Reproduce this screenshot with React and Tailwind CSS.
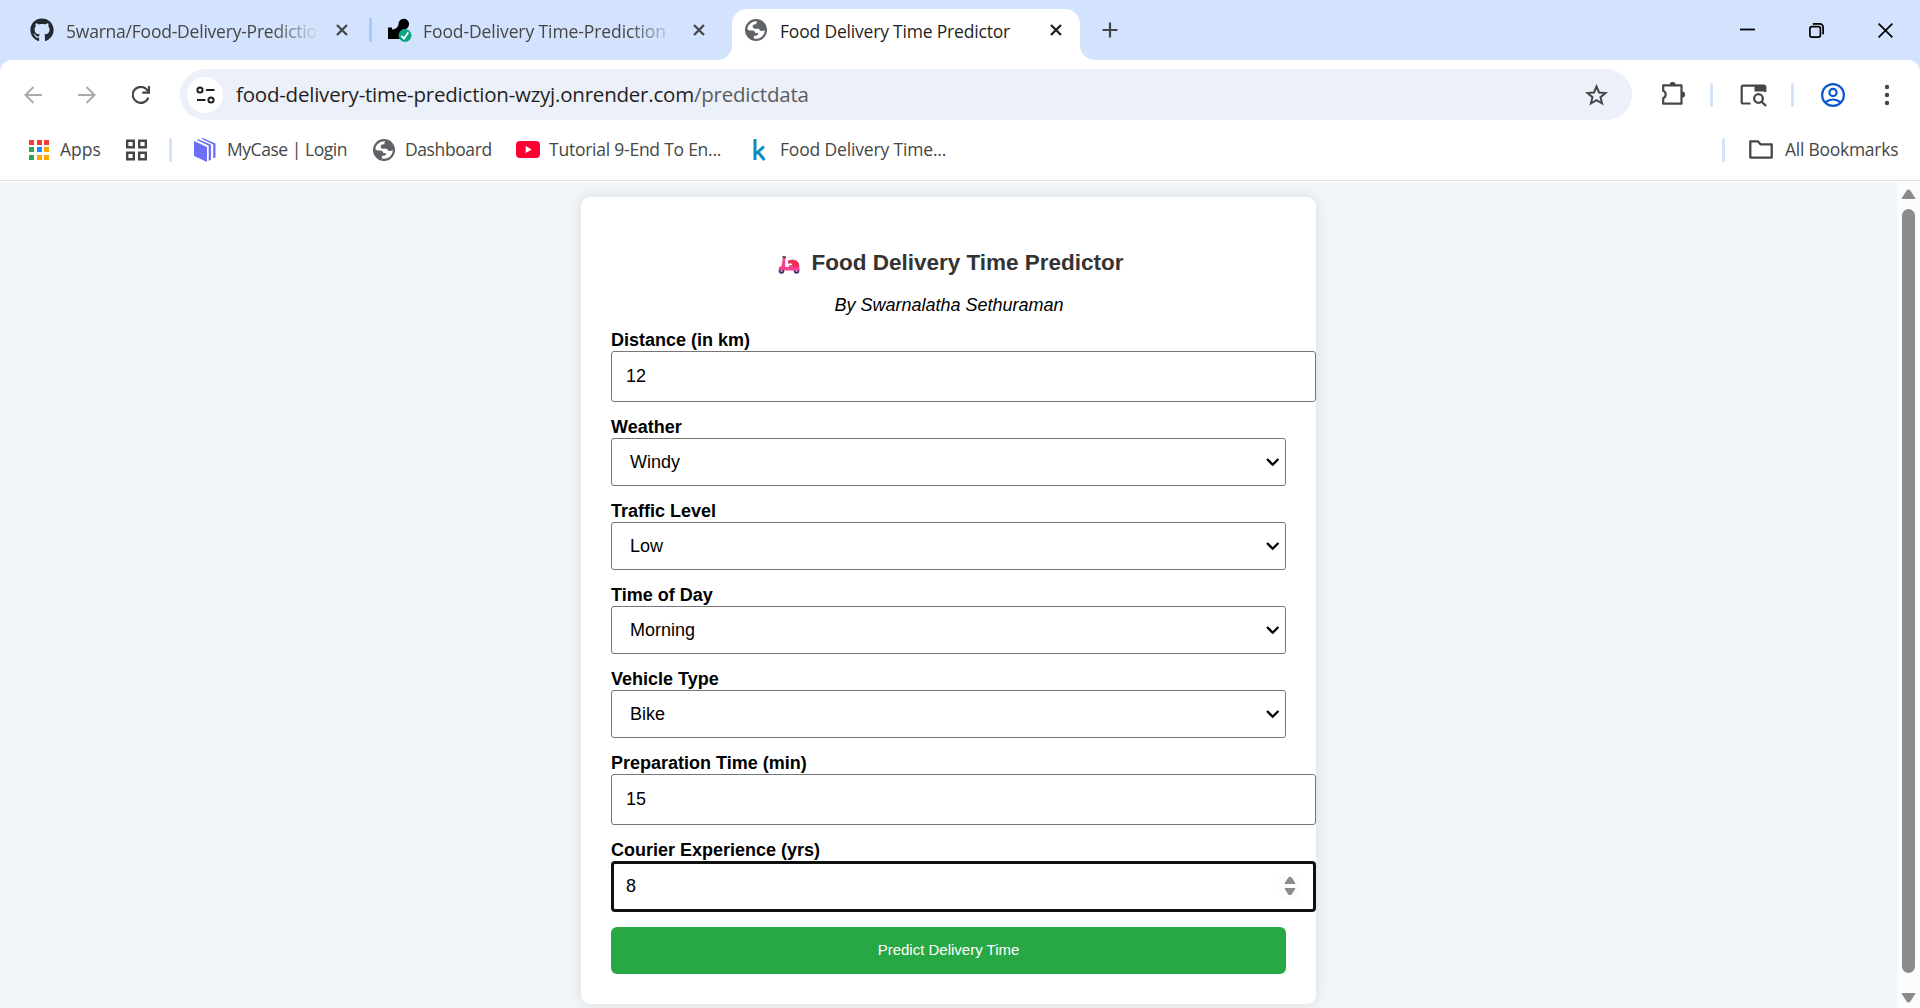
import React from "react";
import { FaGithub } from "react-icons/fa";

function Globe() {
  return (
    <svg width="22" height="22" viewBox="0 0 22 22" className="block shrink-0">
      <circle cx="11" cy="11" r="11" fill="#5f6368" />
      <path d="M12.2 2.4C7.500 2 3 5.200 2.300 10.200c1.500 1.300 3.200 1.300 5.200 1.300 1.600 0 2.600 1 2.800 2.600h2.600c.4 1.700-.6 2.600-2.300 2.700l-1.700.2v2.400c4.700 1.200 9.400-1.400 10.600-6.200l.2-2.200c-1 .8-1.900 1.200-3.200 1.100-1.300-.1-2.200-1-2.400-2.300h-4c-1.600 0-2.500-1-2.400-2.400.1-1.400 1-2.200 2.500-2.200h1.100c0-1.200.2-2.100.9-2.800z" fill="#fff" />
    </svg>
  );
}

const Close = ({ color = "#454746" }) => (
  <svg width="12" height="12" viewBox="0 0 12 12" className="block shrink-0">
    <path d="M1 1l10 10M11 1L1 11" stroke={color} strokeWidth="2.300" />
  </svg>
);

function TabStrip() {
  return (
    <div className="flex h-[60px] shrink-0 bg-[#d3e2fd] text-[17.5px] text-[#454746]">
      <div className="flex h-[60px] w-[372px] items-center pl-[30px]">
        <FaGithub size={24} color="#24292f" className="shrink-0" />
        <div className="ml-3 mt-[3px] w-[253px] whitespace-nowrap tracking-[-0.22px] [mask-image:linear-gradient(to_right,black_82%,transparent)]">
          5warna/Food-Delivery-Predictio
        </div>
        <div className="ml-[17px]"><Close /></div>
        <div className="ml-[21px] h-6 w-[3px] shrink-0 bg-[#a8c7fa]" />
      </div>
      <div className="flex h-[60px] w-[360px] items-center pl-4">
        <svg width="24" height="24" viewBox="0 0 24 24" className="shrink-0">
          <path d="M0 9.500h4v2C8 11.200 10.300 9 10.500 6a5.300 5.300 0 1 1 5.500 5.300c-2.200.2-3.500 1.700-3.500 4V21H0z" fill="#000" />
          <circle cx="17" cy="17.500" r="6.500" fill="#0aa37f" />
          <path d="M13.300 17.800l2.700 2.700 4.300-6" fill="none" stroke="#fff" strokeWidth="1.900" />
        </svg>
        <div className="ml-[11px] mt-[3px] w-[252px] whitespace-nowrap tracking-[-0.09px] [mask-image:linear-gradient(to_right,black_82%,transparent)]">
          Food-Delivery Time-Prediction
        </div>
        <div className="ml-[18px]"><Close /></div>
      </div>
      <div className="relative mt-[9px] flex h-[51px] w-[348px] items-center rounded-t-[15px] bg-white pb-[9px] pl-[13px]">
        <svg width="15" height="15" className="absolute -left-[15px] bottom-0"><path d="M15 0V15H0A15 15 0 0 0 15 0z" fill="#fff" /></svg>
        <svg width="15" height="15" className="absolute -right-[15px] bottom-0"><path d="M0 0V15H15A15 15 0 0 1 0 0z" fill="#fff" /></svg>
        <Globe />
        <div className="ml-[13px] mt-[3px] w-[270px] whitespace-nowrap tracking-[-0.19px] text-[#1f1f1f]">
          Food Delivery Time Predictor
        </div>
        <Close color="#1f1f1f" />
      </div>
      <div className="flex h-[60px] flex-1 items-center pl-[22px] pr-[27px]">
        <svg width="16" height="16" viewBox="0 0 16 16"><path d="M8 0.500v15M0.500 8h15" stroke="#454746" strokeWidth="2.200" /></svg>
        <div className="ml-auto flex items-center gap-[54px]">
          <svg width="15" height="15" viewBox="0 0 15 15"><path d="M0 6.500h15" stroke="#000" strokeWidth="1.800" /></svg>
          <svg width="15" height="15" viewBox="0 0 15 15" fill="none" stroke="#000" strokeWidth="1.700">
            <rect x=".9" y="3.600" width="10.500" height="10.500" rx="2" />
            <path d="M3.800 1.200C4.300.9 4.800.9 5.500.9h5.300a3.300 3.300 0 0 1 3.300 3.300v5.300c0 .7 0 1.300-.4 1.800" />
          </svg>
          <svg width="15" height="15" viewBox="0 0 15 15"><path d="M.6.6l13.800 13.800M14.400.6L.6 14.400" stroke="#000" strokeWidth="1.700" /></svg>
        </div>
      </div>
    </div>
  );
}

const Divider = ({ className }) => <div className={"h-6 w-[3px] shrink-0 rounded-full bg-[#d3e2fd] " + className} />;

function Toolbar() {
  return (
    <div className="flex h-[69px] shrink-0 items-center bg-white pl-6">
      <svg width="18" height="18" viewBox="0 0 18 18" fill="none" stroke="#a9abac" strokeWidth="2"><path d="M18 9H1.500M9.500 1L1.500 9l8 8" /></svg>
      <svg width="18" height="18" viewBox="0 0 18 18" fill="none" stroke="#a9abac" strokeWidth="2" className="ml-9"><path d="M0 9h16.500M8.500 1l8 8-8 8" /></svg>
      <svg width="18" height="18" viewBox="0 0 18 18" fill="none" stroke="#454746" strokeWidth="2.200" className="ml-9">
        <path d="M16.300 11.600A8 8 0 1 1 14.800 3.600L17 6" />
        <path d="M17 0v6.600h-6.700" />
      </svg>
      <div className="ml-[30px] flex h-[51px] w-[1452px] items-center rounded-full bg-[#ecf0f9] pl-[7px] text-[20.5px] text-[#1f1f1f]">
        <div className="flex size-9 items-center justify-center rounded-full bg-white">
          <svg width="19" height="18" viewBox="0 0 19 18" fill="none" stroke="#1f1f1f" strokeWidth="2">
            <circle cx="4" cy="4" r="2.600" /><path d="M10 4h8.500M1 14h8.500" /><circle cx="15" cy="14" r="2.600" />
          </svg>
        </div>
        <div className="ml-[13px] flex-1 whitespace-nowrap pb-px tracking-[-0.22px]">
          food-delivery-time-prediction-wzyj.onrender.com<span className="text-[#5a5c5e]">/predictdata</span>
        </div>
        <svg width="23" height="22" viewBox="0 0 23 22" className="mr-[24px]" fill="none" stroke="#454746" strokeWidth="2">
          <path d="M11.500 2.500l2.500 6 6.500.5-5 4.200 1.600 6.300-5.600-3.400-5.600 3.400 1.600-6.300-5-4.200 6.500-.5z" />
        </svg>
      </div>
      <svg width="25" height="25" viewBox="0 0 25 25" className="ml-[29px]">
        <path d="M2.200 3.400h18.300v18.300H2.200v-5.600a4 4 0 0 0 0-7.400z" fill="none" stroke="#454746" strokeWidth="2.200" strokeLinejoin="round" />
        <path d="M8.600 3a3.100 3.100 0 0 1 6.200 0zM21 9.400a3.100 3.100 0 0 1 0 6.200z" fill="#454746" />
      </svg>
      <Divider className="ml-6" />
      <svg width="27" height="24" viewBox="0 0 27 24" className="ml-[27px]">
        <path d="M10.500 20.500H3.200a1.500 1.500 0 0 1-1.500-1.500V4.200a1.500 1.500 0 0 1 1.500-1.500h20.600a1.500 1.500 0 0 1 1.500 1.500V9" fill="none" stroke="#454746" strokeWidth="2.200" />
        <path d="M14.500 2.500h11v6h-11z" fill="#454746" />
        <circle cx="18.500" cy="15.500" r="4.300" fill="none" stroke="#454746" strokeWidth="2.300" />
        <path d="M21.700 18.700l4.300 4.300" stroke="#454746" strokeWidth="2.300" />
      </svg>
      <Divider className="ml-6" />
      <svg width="24" height="24" viewBox="0 0 24 24" className="ml-[27px]" fill="none" stroke="#0b57d0" strokeWidth="2.200">
        <circle cx="12" cy="12" r="10.900" /><circle cx="12" cy="9.500" r="3.600" /><path d="M4.300 19.300c4.700-3.700 10.700-3.700 15.400 0" />
      </svg>
      <svg width="6" height="22" viewBox="0 0 6 22" className="ml-[39px]" fill="#454746">
        <circle cx="3" cy="3" r="2.200" /><circle cx="3" cy="11" r="2.200" /><circle cx="3" cy="19" r="2.200" />
      </svg>
    </div>
  );
}

const APP_DOTS = ["#f93b34", "#f93b34", "#f93b34", "#30a455", "#1a8cff", "#fba800", "#30a455", "#fba800", "#fba800"];

function Bookmarks() {
  return (
    <div className="flex h-[52px] shrink-0 items-center whitespace-nowrap border-b border-[#dfe1e0] bg-white pb-[10px] pl-[29px] text-[17.5px] text-[#454746]">
      <div className="grid w-5 grid-cols-3 gap-[2.500px]">
        {APP_DOTS.map((c, i) => <div key={i} className="h-[5px]" style={{ backgroundColor: c }} />)}
      </div>
      <div className="ml-[11px] w-[66px]">Apps</div>
      <svg width="21" height="22" viewBox="0 0 21 22" fill="none" stroke="#454746" strokeWidth="2.400">
        <path d="M1.200 1.700h6.600v6.600H1.200zM13.200 1.700h6.600v6.600h-6.600zM1.200 13.700h6.600v6.600H1.200zM13.200 13.700h6.600v6.600h-6.600z" />
      </svg>
      <Divider className="ml-[22px]" />
      <svg width="22" height="24" viewBox="0 0 22 24" className="ml-[22px]" fill="#6c70f7">
        <path d="M0 3l13 6v15L0 18z" />
        <path d="M2.800 2L4.600 1.200 17 6.800V22l-2.300.8V7.800zM7 .6L8.800 0 21.500 5.500V19.500l-2.300.8V6.500z" />
      </svg>
      <div className="ml-[11px] w-[146px] tracking-[-0.46px]">MyCase | Login</div>
      <Globe />
      <div className="ml-[10px] w-[111px] tracking-[-0.4px]">Dashboard</div>
      <svg width="24" height="17" viewBox="0 0 24 17"><rect width="24" height="17" rx="4" fill="#ff0033" /><path d="M9.700 5v7l6-3.500z" fill="#fff" /></svg>
      <div className="ml-[9px] w-[204px] tracking-[-0.24px]">Tutorial 9-End To En...</div>
      <svg width="14" height="22" viewBox="0 0 14 22" fill="none" stroke="#0b8dc0" strokeWidth="3"><path d="M2 0v21M2.500 15l8.500-7.500M5 13l6.500 8" /></svg>
      <div className="ml-[13px] tracking-[-0.16px]">Food Delivery Time...</div>
      <Divider className="ml-auto" />
      <svg width="24" height="19" viewBox="0 0 24 19" className="ml-6" fill="none" stroke="#454746" strokeWidth="2.300" strokeLinejoin="round">
        <path d="M1.300 1.300h7.600l2.600 3h11.200v13.300H1.300z" />
      </svg>
      <div className="ml-3 w-[135px] tracking-[-0.26px]">All Bookmarks</div>
    </div>
  );
}

const Label = ({ children }) => <div className="h-[22px] whitespace-nowrap text-[18px] font-bold leading-[22px]">{children}</div>;

function SelectField({ label, value }) {
  return (
    <div className="mb-[14px]">
      <Label>{label}</Label>
      <div className="flex h-12 w-[675px] items-center justify-between rounded-[3px] border border-[#767676] bg-white pl-[18px] pr-[5px] text-[18px]">
        <span>{value}</span>
        <svg width="15" height="10" viewBox="0 0 15 10"><path d="M2 2l5.700 5.700L13.400 2" fill="none" stroke="#000" strokeWidth="2.300" /></svg>
      </div>
    </div>
  );
}

function InputField({ label, value }) {
  return (
    <div className="mb-[14px]">
      <Label>{label}</Label>
      <div className="flex h-[51px] w-[705px] items-center rounded-[3px] border border-[#767676] bg-white pl-[14px] text-[18px]">
        <span>{value}</span>
      </div>
    </div>
  );
}

function Scooter() {
  return (
    <svg width="22" height="18" viewBox="0 0 22 18" className="block">
      <circle cx="3.500" cy="15" r="2.800" fill="#4b2a63" /><circle cx="18.500" cy="15" r="2.800" fill="#4b2a63" />
      <path d="M5 1.500h2.200v9.500h3.500L11.500 9l9 .5c1 2 1.300 3.500 1 5H8.500L1 14c-1-1.500 0-3.500 2.500-4z" fill="#f8418e" />
      <path d="M10 4.500c3-1.300 7-.8 9 .5 1.800 1.300 2.500 3.500 2.300 6h-6l-1.800-3.500H10z" fill="#ee3158" />
      <path d="M4 .3h4v2H5z" fill="#5b3a46" /><circle cx="3.500" cy="15" r="1" fill="#c9b8dd" /><circle cx="18.500" cy="15" r="1" fill="#c9b8dd" />
    </svg>
  );
}

export default function App() {
  return (
    <div className="flex h-[1008px] w-[1920px] flex-col overflow-hidden bg-[#d3e2fd] font-['Open_Sans',sans-serif]">
      <TabStrip />
      <div className="shrink-0 overflow-hidden rounded-t-xl">
        <Toolbar />
        <Bookmarks />
      </div>
      <div className="flex flex-1 border-t border-white bg-[#f2f6f8] font-['Liberation_Sans',Arial,sans-serif] text-black">
        <div className="flex flex-1 items-start justify-center">
          <div className="mt-[15px] h-[807px] w-[735px] rounded-[9px] bg-white pl-[30px] shadow-[0_0_15px_rgba(0,0,0,0.1)]">
            <div className="flex h-[91px] w-[675px] items-end justify-center pl-[5px] text-[22.5px] font-bold leading-[50px] text-[#333]">
              <div className="flex h-[50px] items-center gap-[11px] whitespace-nowrap"><div className="pt-[4px]"><Scooter /></div>Food Delivery Time Predictor</div>
            </div>
            <div className="flex h-[41px] w-[675px] items-center justify-center pb-[7px] pl-px text-[18px] italic">By Swarnalatha Sethuraman</div>
            <InputField label="Distance (in km)" value="12" />
            <SelectField label="Weather" value="Windy" />
            <SelectField label="Traffic Level" value="Low" />
            <SelectField label="Time of Day" value="Morning" />
            <SelectField label="Vehicle Type" value="Bike" />
            <InputField label="Preparation Time (min)" value="15" />
            <Label>Courier Experience (yrs)</Label>
            <div className="flex h-[51px] w-[705px] items-center justify-between rounded-[4px] border-[3px] border-[#101010] bg-white pl-3 pr-[12px] text-[18px]">
              <span>8</span>
              <svg width="22" height="22" viewBox="0 0 22 22"><path d="M0 0h22v22H0z" fill="#fcfcfc" /><path d="M6 7.500l3.800-6h2.400l3.800 6zM6 12.500h10l-3.800 6H9.800z" fill="#8b8b8b" stroke="#8b8b8b" strokeLinejoin="round" /></svg>
            </div>
            <div className="mt-[15px] flex h-[47px] w-[675px] items-center justify-center rounded-md bg-[#28a745] text-[15px] text-white">Predict Delivery Time</div>
          </div>
        </div>
        <div className="flex w-[23px] shrink-0 flex-col items-center bg-[#fcfcfc] pt-[6px]">
          <svg width="15" height="12" viewBox="0 0 15 12"><path d="M1 10.500L6.500 2h2L14 10.500z" fill="#8b8b8b" stroke="#8b8b8b" strokeLinejoin="round" /></svg>
          <div className="mt-[9px] h-[764px] w-[13px] rounded-full bg-[#8b8b8b]" />
          <svg width="15" height="12" viewBox="0 0 15 12" className="mt-[19px]"><path d="M1 1.500h13L8.500 10h-2z" fill="#8b8b8b" stroke="#8b8b8b" strokeLinejoin="round" /></svg>
        </div>
      </div>
    </div>
  );
}
